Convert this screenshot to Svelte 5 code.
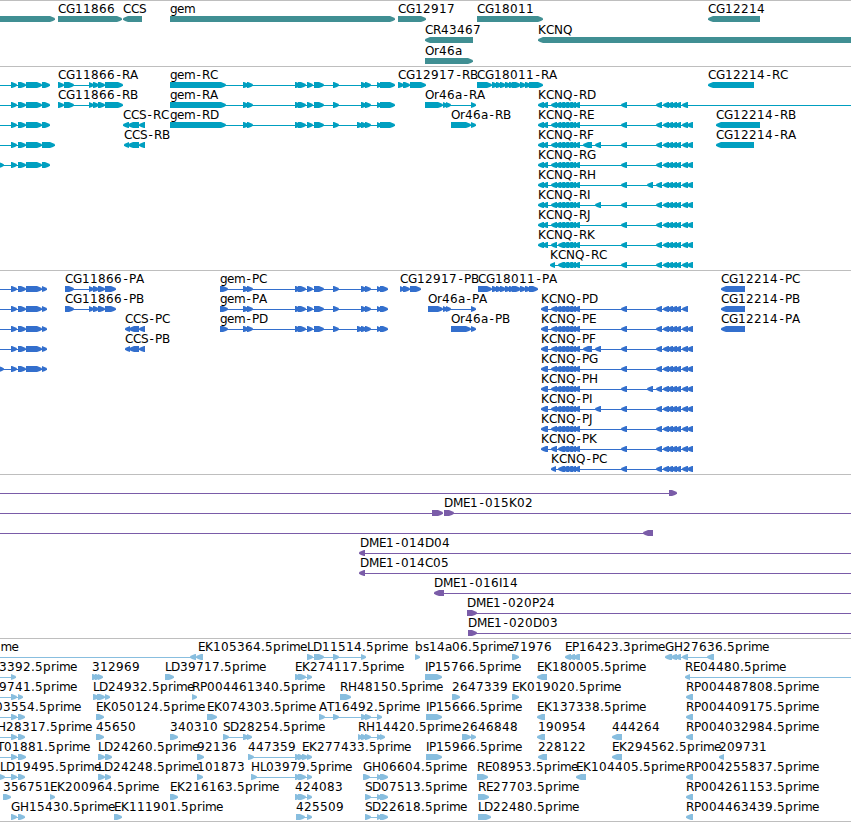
<script>
  const WIDTH = 851;

  // pixel advance of each glyph in the label face; digits default to 8
  const advances = {
    '.': 4, '-': 7, A: 8, B: 7, C: 8, D: 9, E: 7, F: 6, G: 9, H: 9, I: 3, J: 4, K: 8, L: 6, M: 10,
    N: 9, O: 9, P: 7, Q: 9, R: 8, S: 7, T: 7, a: 7, b: 8, e: 7, g: 7, i: 3, m: 11, p: 8, r: 5, s: 6
  };

  function glyphXs(label, start) {
    let x = start;
    return [...label]
      .map((char) => {
        // the hyphen is narrower than its cell, so centre it
        const at = char === '-' ? x + 1.5 : x;
        x += advances[char] ?? 8;
        return at;
      })
      .join(' ');
  }

  // f(row, label, exons, options): exons are [start, end] pairs in track pixels
  const f = (row, label, exons, options = {}) => ({ row, label, exons, ...options });
  const rev = (row, label, exons, options = {}) => f(row, label, exons, { ...options, reverse: true });

  function shape([start, end], reverse) {
    const head = Math.min(5, end - start);
    const tip = reverse ? start : end;
    const tail = reverse ? end : start;
    const inward = reverse ? 1 : -1;
    const neck = tip + inward * head;
    const bend = tip + inward * 2;
    return `${tail},0 ${neck},0 ${bend},1.2 ${tip},2.4 ${tip},3.8 ${bend},5 ${neck},6 ${tail},6`;
  }

  function line(feature) {
    const ends = feature.exons.flat();
    return {
      from: feature.from ?? Math.min(...ends),
      to: feature.to ?? Math.max(...ends)
    };
  }

  const genes = [
    f(0, '', [[-20, 55]]),
    f(0, 'CG11866', [[58, 122]]),
    rev(0, 'CCS', [[123, 142]]),
    f(0, 'gem', [[170, 395]]),
    f(0, 'CG12917', [[398, 426]]),
    f(0, 'CG18011', [[477, 543]]),
    rev(0, 'CG12214', [[708, 760]]),
    rev(1, 'CR43467', [[425, 473]]),
    rev(1, 'KCNQ', [[538, 870]]),
    f(2, 'Or46a', [[425, 473]])
  ];

  const edgeExons = [[11, 17], [18, 26], [26, 42]];
  const cg11866Exons = [[89, 94], [93, 99], [98, 105]];
  const gemMiddle = [[243, 249], [247, 253], [295, 301], [298, 306], [307, 313], [314, 324], [333, 339], [361, 367], [365, 371], [377, 382]];
  const cg18011Exons = [[492, 498], [496, 502], [500, 506], [505, 511], [509, 515], [512, 521], [520, 526], [525, 531]];

  const kcnqCore = [[555, 561], [558, 565], [562, 569], [566, 573], [570, 576], [574, 580]];
  const kcnqTail = [[621, 627], [656, 662], [663, 669], [667, 673], [671, 677], [675, 681], [682, 688]];
  const kcnqExtras = {
    F: [[583, 592], [595, 601]],
    H: [[647, 653]],
    I: [[595, 601]]
  };

  function kcnq(kind, head, shortHead) {
    const isoforms = [...'DEFGHIJK'].map((letter, index) =>
      rev(
        index + 1,
        `KCNQ-${kind}${letter}`,
        [
          ...head,
          [551, 557],
          ...(letter === 'K' ? kcnqCore.slice(1) : kcnqCore),
          ...kcnqTail,
          ...(kcnqExtras[letter] ?? []),
          ...(letter === 'D' ? [] : [[687, 693]])
        ],
        letter === 'D' && kind === 'R' ? { to: WIDTH } : {}
      )
    );
    return [
      ...isoforms,
      rev(9, `KCNQ-${kind}C`, [[shortHead, shortHead + 5], ...kcnqCore.slice(1), ...kcnqTail, [687, 693]])
    ];
  }

  const transcripts = [
    ...[0, 1, 2].map((row) => f(row, '', [...edgeExons, [42, 50]], { from: 0 })),
    f(3, '', [...edgeExons, [42, 55]], { from: 0 }),
    f(4, '', [[-2, 4], ...edgeExons, [42, 50]]),
    ...['A', 'B'].map((id, row) => f(row, `CG11866-R${id}`, [[58, 64], [64, 74], ...cg11866Exons, [105, 123]])),
    rev(2, 'CCS-RC', [[123, 129], [128, 139], [139, 145]]),
    rev(3, 'CCS-RB', [[124, 129], [128, 139], [139, 145]]),
    f(0, 'gem-RC', [[170, 226], ...gemMiddle, [380, 395]]),
    f(1, 'gem-RA', [[170, 226], ...gemMiddle, [380, 395]]),
    f(2, 'gem-RD', [[170, 226], ...gemMiddle, [357, 363], [380, 395]]),
    f(0, 'CG12917-RB', [[398, 404], [403, 410], [410, 426]]),
    f(0, 'CG18011-RA', [[477, 492], ...cg18011Exons, [529, 543]]),
    f(1, 'Or46a-RA', [[425, 443], [443, 448], [446, 451], [471, 476]]),
    f(2, 'Or46a-RB', [[451, 471], [471, 476]]),
    ...kcnq('R', [[538, 544], [542, 548]], 550),
    rev(0, 'CG12214-RC', [[708, 754]]),
    rev(2, 'CG12214-RB', [[716, 760]]),
    rev(3, 'CG12214-RA', [[716, 754]])
  ];

  const proteins = [
    ...[0, 1, 2, 3].map((row) => f(row, '', [...edgeExons, [42, 47]], { from: 0 })),
    f(4, '', [[-2, 4], ...edgeExons, [42, 47]]),
    ...['A', 'B'].map((id, row) => f(row, `CG11866-P${id}`, [[65, 74], ...cg11866Exons, [105, 116]])),
    rev(2, 'CCS-PC', [[125, 130], [129, 139], [139, 145]]),
    rev(3, 'CCS-PB', [[125, 130], [129, 139], [139, 145]]),
    f(0, 'gem-PC', [[220, 228], ...gemMiddle, [380, 388]]),
    f(1, 'gem-PA', [[220, 228], ...gemMiddle, [380, 388]]),
    f(2, 'gem-PD', [[220, 228], ...gemMiddle, [357, 363], [380, 388]]),
    f(0, 'CG12917-PB', [[400, 405], [403, 410], [410, 421]]),
    f(0, 'CG18011-PA', [[478, 492], ...cg18011Exons, [529, 538]]),
    f(1, 'Or46a-PA', [[428, 443], [443, 448], [446, 451], [471, 476]]),
    f(2, 'Or46a-PB', [[451, 471], [471, 476]]),
    ...kcnq('P', [[541, 548]], 551),
    ...['C', 'B', 'A'].map((id, row) => rev(row, `CG12214-P${id}`, [[721, 745]]))
  ];

  const clones = [
    f(0, '', [[669, 677]], { from: 0 }),
    f(1, '', [[432, 443]], { from: 0 }),
    f(1, 'DME1-015K02', [[444, 454]], { to: WIDTH }),
    rev(2, '', [[643, 653]], { from: 0 }),
    rev(3, 'DME1-014D04', [[359, 365]], { from: 360, to: WIDTH }),
    rev(4, 'DME1-014C05', [[359, 365]], { from: 360, to: WIDTH }),
    rev(5, 'DME1-016I14', [[434, 444]], { to: WIDTH }),
    f(6, 'DME1-020P24', [[467, 477]], { to: WIDTH }),
    f(7, 'DME1-020D03', [[468, 477]], { to: WIDTH })
  ];

  const ests = [
    rev(0, 'me', [[190, 196]], { from: 0, labelX: 0.5 }),
    rev(0, 'EK105364.5prime', [[196, 203]], { from: 195, labelX: 198 }),
    f(0, 'LD11514.5prime', [[307, 313], [314, 324], [333, 339], [361, 366]]),
    f(0, 'bs14a06.5prime', [[415, 420]]),
    f(0, '71976', [[512, 519]]),
    rev(0, 'EP16423.3prime', [[565, 571], [569, 575], [573, 580]]),
    rev(0, 'GH27636.5prime', [[665, 672], [671, 677], [675, 681], [682, 688], [707, 714]]),

    f(1, '3392.5prime', [[11, 16]], { from: 0, labelX: -1 }),
    f(1, '312969', [[92, 98], [95, 101], [98, 103]]),
    f(1, 'LD39717.5prime', [[165, 174]]),
    f(1, 'EK274117.5prime', [[295, 301], [298, 306], [307, 312]]),
    f(1, 'IP15766.5prime', [[425, 442]]),
    rev(1, 'EK180005.5prime', [[537, 547]]),
    rev(1, 'RE04480.5prime', [[685, 690]], { to: WIDTH }),

    f(2, '9741.5prime', [[11, 17], [18, 23]], { from: 0, labelX: -1 }),
    f(2, 'LD24932.5prime', [[93, 99], [97, 105], [105, 110]]),
    f(2, 'RP004461340.5prime', [[192, 197]]),
    f(2, 'RH48150.5prime', [[340, 351]]),
    f(2, '2647339', [[452, 460]]),
    f(2, 'EK019020.5prime', [[512, 519]]),
    rev(2, 'RP004487808.5prime', [[686, 693]]),

    f(3, '03554.5prime', [[11, 17], [18, 25]], { from: 0, labelX: -5 }),
    f(3, 'EK050124.5prime', [[96, 104]]),
    f(3, 'EK074303.5prime', [[207, 217]]),
    f(3, 'AT16492.5prime', [[319, 325], [333, 339], [361, 367], [365, 371], [377, 382]]),
    f(3, 'IP15666.5prime', [[426, 442]]),
    rev(3, 'EK137338.5prime', [[537, 545]]),
    rev(3, 'RP004409175.5prime', [[686, 693]]),

    f(4, 'H28317.5prime', [[11, 17], [18, 25]], { from: 0, labelX: -3 }),
    f(4, '45650', [[96, 104]]),
    f(4, '340310', [[170, 178]]),
    f(4, 'SD28254.5prime', [[223, 229], [243, 249], [247, 252]]),
    f(4, 'RH14420.5prime', [[358, 363], [361, 367], [365, 371], [377, 382], [380, 385]]),
    f(4, '2646848', [[462, 471], [471, 476]]),
    rev(4, '190954', [[537, 545]], { labelX: 538 }),
    rev(4, '444264', [[612, 622]]),
    rev(4, 'RP004032984.5prime', [[686, 693]]),

    f(5, 'T01881.5prime', [[11, 17], [18, 26]], { from: 0, labelX: -3 }),
    f(5, 'LD24260.5prime', [[98, 105], [105, 112]]),
    f(5, '92136', [[197, 204]]),
    f(5, '447359', [[248, 254], [295, 301], [298, 304]]),
    f(5, 'EK277433.5prime', [[302, 308], [307, 312]]),
    f(5, 'IP15966.5prime', [[426, 442]]),
    rev(5, '228122', [[538, 547]]),
    rev(5, 'EK294562.5prime', [[612, 622]]),
    rev(5, '209731', [[719, 724]]),

    f(6, 'LD19495.5prime', [[0, 5], [11, 17], [18, 25]]),
    f(6, 'LD24248.5prime', [[98, 105], [105, 111]]),
    f(6, '101873', [[197, 203]]),
    f(6, 'HL03979.5prime', [[251, 257], [295, 301], [298, 306], [307, 312]]),
    f(6, 'GH06604.5prime', [[363, 370], [377, 382], [380, 388]]),
    f(6, 'RE08953.5prime', [[477, 488]]),
    rev(6, 'EK104405.5prime', [[576, 586]]),
    rev(6, 'RP004255837.5prime', [[686, 693]]),

    f(7, '356751', [[3, 11]]),
    f(7, 'EK200964.5prime', [[50, 55]]),
    f(7, 'EK216163.5prime', [[170, 178]]),
    f(7, '424083', [[295, 301], [298, 306], [307, 312]]),
    f(7, 'SD07513.5prime', [[365, 371], [377, 382], [380, 388]]),
    f(7, 'RE27703.5prime', [[478, 489]]),
    rev(7, 'RP004261153.5prime', [[686, 693]]),

    f(8, 'GH15430.5prime', [[11, 17], [18, 25]]),
    f(8, 'EK111901.5prime', [[114, 122]]),
    f(8, '425509', [[296, 305], [307, 312]]),
    f(8, 'SD22618.5prime', [[365, 371], [377, 382], [380, 388]]),
    f(8, 'LD22480.5prime', [[478, 491]]),
    rev(8, 'RP004463439.5prime', [[686, 693]])
  ];

  const tracks = [
    { name: 'genes', pitch: 21, height: 65, features: genes },
    { name: 'transcripts', pitch: 20, height: 203, features: transcripts },
    { name: 'proteins', pitch: 20, height: 203, features: proteins },
    { name: 'clones', pitch: 20, height: 163, features: clones },
    { name: 'ests', pitch: 20, height: 182, features: ests }
  ];
</script>

<main class="browser">
  {#each tracks as track (track.name)}
    <section class="track track--{track.name}">
      <svg width={WIDTH} height={track.height} viewBox="0 0 {WIDTH} {track.height}">
        {#each track.features as feature}
          {@const span = line(feature)}
          <g transform="translate(0 {feature.row * track.pitch})">
            <rect class="span" x={span.from} y="18" width={span.to - span.from} height="1" />
            <g transform="translate(0 15)">
              {#each feature.exons as exon}
                <polygon points={shape(exon, feature.reverse)} />
              {/each}
            </g>
            {#if feature.label}
              <text x={glyphXs(feature.label, feature.labelX ?? span.from)} y="12">{feature.label}</text>
            {/if}
          </g>
        {/each}
      </svg>
    </section>
  {/each}
</main>

<style>
  :global(body) {
    margin: 0;
    background: #fff;
  }

  .browser {
    width: 851px;
    overflow: hidden;
    border-bottom: 1px solid #bebebe;
  }

  .track {
    border-top: 1px solid #bebebe;
  }

  .track svg {
    display: block;
  }

  .track--genes {
    fill: #408f93;
  }

  .track--transcripts {
    fill: #009fc0;
  }

  .track--proteins {
    fill: #336fcd;
  }

  .track--clones {
    fill: #7a5ca8;
  }

  .track--ests {
    fill: #88bedf;
  }

  text {
    fill: #000;
    font: 12px 'DejaVu Sans', sans-serif;
  }
</style>
